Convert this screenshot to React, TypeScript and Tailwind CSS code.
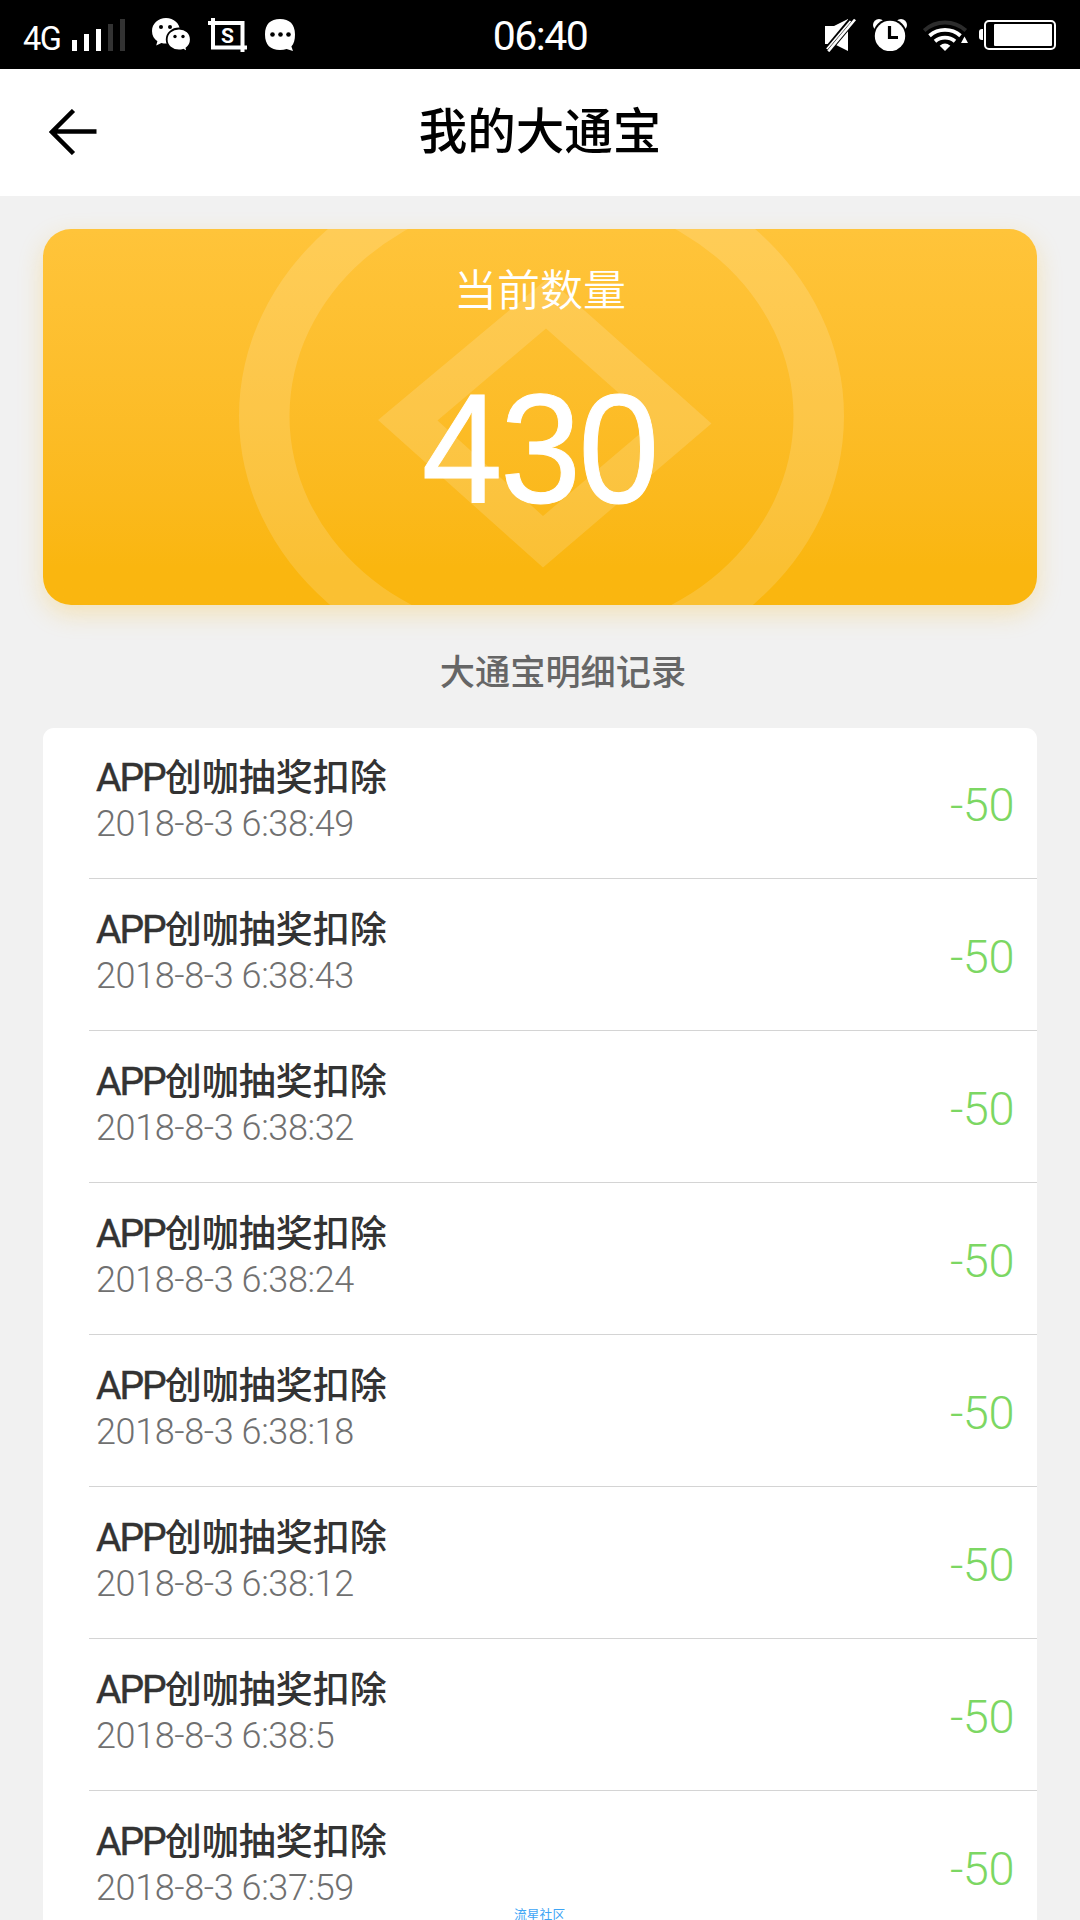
import React from "react";

const records = [
  "2018-8-3 6:38:49",
  "2018-8-3 6:38:43",
  "2018-8-3 6:38:32",
  "2018-8-3 6:38:24",
  "2018-8-3 6:38:18",
  "2018-8-3 6:38:12",
  "2018-8-3 6:38:5",
  "2018-8-3 6:37:59",
];

function SignalBars() {
  return (
    <svg className="ml-3 h-8 w-[53px]" viewBox="0 0 53 32" fill="#fff">
      <rect x="0" y="21" width="5" height="11" />
      <rect x="12" y="15" width="5" height="17" />
      <rect x="24" y="10" width="5" height="22" />
      <rect x="36" y="5" width="5" height="27" fill="#333" />
      <rect x="48" y="0" width="5" height="32" fill="#333" />
    </svg>
  );
}

function WeChatIcon() {
  return (
    <svg className="ml-[27px] h-[34px] w-[39px]" viewBox="0 0 39 34">
      <path
        d="M14 0C6.2 0 0 5.6 0 13c0 4.400 2 8 5.400 10.300L4.200 27.500l5.200-2.600c1.500.4 3 .6 4.600.6 7.800 0 14-5.400 14-12.700S21.800 0 14 0z"
        fill="#fff"
      />
      <path
        d="M27 10.500c-6.800 0-12.300 4.700-12.300 11S20.200 32.500 27 32.500c1.500 0 3-.3 4.200-.7l4.300 2.200-1-3.900c2.700-2 4.300-5 4.300-8.600 0-6.300-5-11-11.800-11z"
        fill="#fff"
        stroke="#000"
        strokeWidth="1.800"
      />
      <circle cx="9" cy="9" r="2" />
      <circle cx="18" cy="9" r="2" />
      <circle cx="23" cy="18.500" r="1.700" />
      <circle cx="31" cy="18.500" r="1.700" />
    </svg>
  );
}

function ScreenshotIcon() {
  return (
    <svg className="ml-[17px] h-[34px] w-[39px]" viewBox="0 0 39 34">
      <path d="M0 5h34.500V34M5 0v29.500H39" fill="none" stroke="#fff" strokeWidth="4" />
      <text
        x="19.500"
        y="24.500"
        textAnchor="middle"
        fill="#fff"
        className="font-['Roboto',sans-serif] text-[21px] font-bold"
      >
        S
      </text>
    </svg>
  );
}

function ChatIcon() {
  return (
    <svg className="ml-[18px] h-8 w-[30px]" viewBox="0 0 30 32">
      <path
        d="M15 0C5.500 0 0 5 0 15.500S5.500 31 15 31c2.500 0 4.700-.3 6.600-.9L28 32l-1.600-4.600C28.900 24.700 30 20.700 30 15.500 30 5 24.500 0 15 0z"
        fill="#fff"
      />
      <circle cx="7.500" cy="15.500" r="2.300" />
      <circle cx="15.500" cy="15.500" r="2.300" />
      <circle cx="23.500" cy="15.500" r="2.300" />
    </svg>
  );
}

function MuteIcon() {
  return (
    <svg className="h-[34px] w-[31px]" viewBox="0 0 31 34">
      <path d="M0 8h9L23 1v32L9 26H0z" fill="#fff" />
      <path d="M0 35L30 -1" stroke="#000" strokeWidth="7.500" />
      <path d="M1.800 31L25.500 3" stroke="#fff" strokeWidth="1.800" />
      <path d="M3.300 33.300L30 1.500" stroke="#fff" strokeWidth="2.600" />
    </svg>
  );
}

function AlarmIcon() {
  return (
    <svg className="ml-[17px] h-8 w-[34px]" viewBox="0 0 34 32">
      <circle cx="6" cy="6" r="6" fill="#fff" />
      <circle cx="28" cy="6" r="6" fill="#fff" />
      <circle cx="17" cy="17" r="17.300" fill="#000" />
      <circle cx="17" cy="17" r="15.200" fill="#fff" />
      <path d="M16.500 7v11.500H25" fill="none" stroke="#000" strokeWidth="3.200" />
    </svg>
  );
}

function WifiIcon() {
  return (
    <svg className="ml-4 h-8 w-[45px]" viewBox="0 0 45 32" fill="none">
      <path d="M1.200 11.500a31 31 0 0 1 41.600 0" stroke="#2c2c2c" strokeWidth="3.800" />
      <path d="M6.500 16.800a23.500 23.500 0 0 1 31 0" stroke="#fff" strokeWidth="3.800" />
      <path d="M12 22.200a15.500 15.500 0 0 1 20 0" stroke="#fff" strokeWidth="3.800" />
      <path d="M22 32l-5.300-5.300q5.300-4.200 10.600 0z" fill="#fff" />
      <path d="M41.500 17.500l3.500 6.500h-7z" fill="#fff" />
    </svg>
  );
}

function BatteryIcon() {
  return (
    <svg className="ml-[11px] h-[30px] w-[77px]" viewBox="0 0 77 30">
      <path d="M4 9H3a3 3 0 0 0-3 3v5a3 3 0 0 0 3 3h1z" fill="#fff" />
      <rect x="6" y="1" width="70" height="28" rx="4" fill="none" stroke="#fff" strokeWidth="2" />
      <rect x="15" y="4" width="58" height="22" rx="1" fill="#fff" />
    </svg>
  );
}

function StatusBar() {
  return (
    <div className="grid h-[69px] grid-cols-[1fr_auto_1fr] items-center bg-black font-['Roboto',sans-serif] text-white">
      <div className="flex items-center pl-[23px]">
        <span className="w-[37px] whitespace-nowrap pt-[8px] text-[32.500px] leading-8 tracking-[-1.500px]">4G</span>
        <SignalBars />
        <WeChatIcon />
        <ScreenshotIcon />
        <ChatIcon />
      </div>
      <span className="pt-[3px] text-[41px] leading-[41px] tracking-[-1.500px]">06:40</span>
      <div className="flex items-center justify-end pr-6">
        <MuteIcon />
        <AlarmIcon />
        <WifiIcon />
        <BatteryIcon />
      </div>
    </div>
  );
}

function Header() {
  return (
    <header className="grid h-[127px] grid-cols-[1fr_auto_1fr] items-center bg-white pb-[2px]">
      <svg
        className="ml-[49px] h-[46px] w-12"
        viewBox="0 0 48 46"
        fill="none"
        stroke="#000"
        strokeWidth="4.500"
      >
        <path d="M24.500 1.500L3 23l21.500 21.500M3 22.500h44.500" />
      </svg>
      <h1 className="pb-[6px] text-[48.500px] font-medium leading-none text-black">我的大通宝</h1>
    </header>
  );
}

function BalanceCard() {
  return (
    <section className="relative mt-[33px] h-[376px] rounded-[28px] bg-linear-to-b from-[#ffc43a] to-[#fab60f] to-90% shadow-[0_9px_24px_rgba(250,190,40,0.28)]">
      <svg
        className="absolute inset-0 h-full w-full"
        viewBox="43 229 994 376"
        preserveAspectRatio="none"
        fill="#fff"
        fillOpacity="0.15"
        fillRule="evenodd"
      >
        <path d="M239 416a302.500 264 0 0 1 605 0a302.500 264 0 0 1-605 0zM289.500 416a252 220.500 0 0 0 504 0a252 220.500 0 0 0-504 0z" />
        <path d="M378 420L548 278L711.500 423.500L543 567.500zM437.500 420.500L546 328.500L652.500 423L543 516z" />
      </svg>
      <div className="relative flex flex-col items-center text-white">
        <p className="mt-[37px] text-[43px] font-[350] leading-[43px]">当前数量</p>
        <p className="mt-[60px] -translate-x-px scale-x-[0.93] font-['Liberation_Sans',sans-serif] text-[156px] leading-[158px] tracking-[-2.500px] [-webkit-text-stroke:1px_white]">
          430
        </p>
      </div>
    </section>
  );
}

function RecordRow({ time }: { time: string }) {
  return (
    <li className="ml-[46px] flex h-[152px] shrink-0 justify-between border-b border-[#d4d4d4] last:border-b-0">
      <div className="pl-[7px] pt-[28px]">
        <p className="text-[37px] font-medium leading-[40px] text-[#333]">
          <span className="font-['Roboto',sans-serif] text-[39px] font-normal tracking-[-2px] [-webkit-text-stroke:0.500px_#333]">
            APP
          </span>
          创咖抽奖扣除
        </p>
        <p className="mt-[5px] font-['Roboto',sans-serif] text-[36px] font-light leading-[42px] tracking-[-0.400px] text-[#707070]">
          {time}
        </p>
      </div>
      <span className="pr-[23px] pt-[50px] font-['Roboto',sans-serif] text-[47px] font-light leading-[56px] tracking-[-0.500px] text-[#7cd763]">
        -50
      </span>
    </li>
  );
}

export default function App() {
  return (
    <div className="relative h-[1920px] w-[1080px] overflow-hidden bg-[#f1f1f1] font-['Noto_Sans_CJK_SC',sans-serif]">
      <StatusBar />
      <Header />
      <main className="px-[43px]">
        <BalanceCard />
        <h2 className="mt-[47px] pl-[46px] text-center text-[35.200px] font-medium leading-[35px] text-[#666]">
          大通宝明细记录
        </h2>
        <ul className="mt-[41px] flex flex-col rounded-t-[11px] bg-white pb-10 [&>li:first-child]:-mt-px">
          {records.map((time) => (
            <RecordRow key={time} time={time} />
          ))}
        </ul>
      </main>
      <span className="absolute bottom-0 left-[514px] whitespace-nowrap text-[12.800px] leading-[13px] text-[#3ea5f5]">
        流星社区
      </span>
    </div>
  );
}
